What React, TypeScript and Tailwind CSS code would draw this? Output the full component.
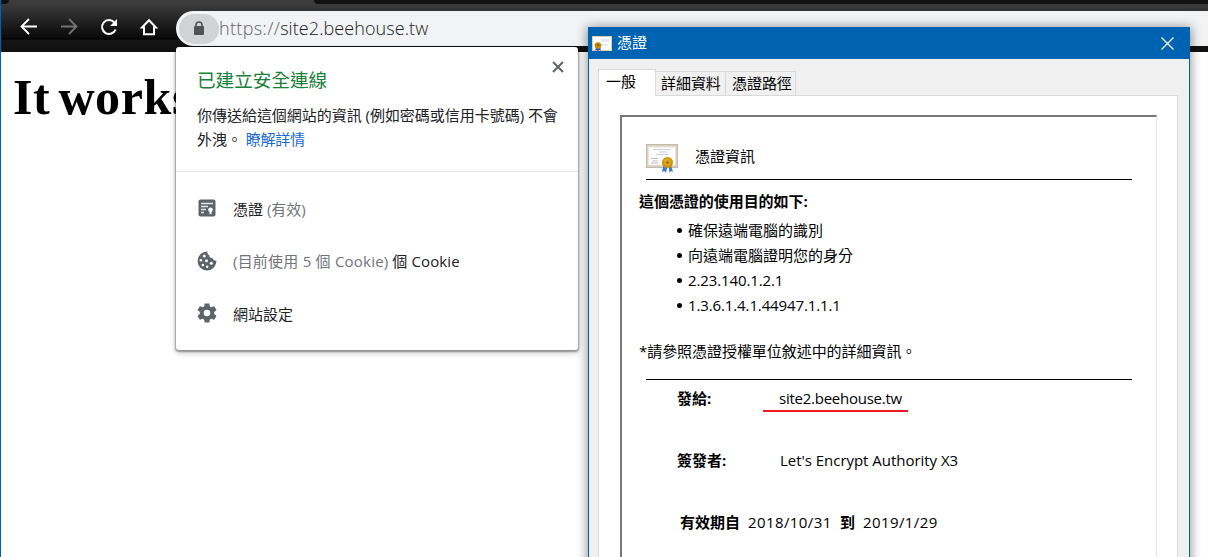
import React from "react";

function BackIcon() {
  return (
    <svg width="20" height="20" viewBox="0 0 20 20" fill="none" stroke="currentColor" strokeWidth="1.800">
      <path d="M18 9.500H3M10 2L2.500 9.500l7.500 7.500" />
    </svg>
  );
}

function ForwardIcon() {
  return (
    <svg width="20" height="20" viewBox="0 0 20 20" fill="none" stroke="currentColor" strokeWidth="1.800">
      <path d="M2 9.500h15M10 2l7.500 7.500-7.500 7.500" />
    </svg>
  );
}

function ReloadIcon() {
  return (
    <svg width="20" height="20" viewBox="0 0 20 20" fill="none">
      <path d="M16.600 12.500A7 7 0 1 1 15.200 5.200" stroke="currentColor" strokeWidth="2" />
      <path d="M18 2v7h-7z" fill="currentColor" />
    </svg>
  );
}

function HomeIcon() {
  return (
    <svg width="20" height="20" viewBox="0 0 20 20" fill="none" stroke="currentColor" strokeWidth="2">
      <path d="M3 10.500L10 3.200l7 7.300h-2v6.700H5v-6.700z" />
    </svg>
  );
}

function LockIcon() {
  return (
    <svg width="12" height="15" viewBox="0 0 12 15">
      <rect x="1" y="5" width="10" height="9" rx="1" fill="#505358" />
      <path d="M3 6V4a3 3 0 0 1 6 0v2" fill="none" stroke="#505358" strokeWidth="1.600" />
    </svg>
  );
}

function CertBadgeIcon() {
  return (
    <svg width="18" height="18" viewBox="0 0 18 18">
      <rect x="0.500" y="0.500" width="17" height="17" rx="2" fill="#5f6368" />
      <path d="M3 4.500h12M3 7.500h7M3 10.500h5M3 13.500h3" stroke="#e4e4e4" strokeWidth="1.300" />
      <circle cx="12.500" cy="10.800" r="2.300" fill="#fff" />
      <path d="M11.500 12h2v3.500l-1-.8-1 .8z" fill="#fff" />
    </svg>
  );
}

function CookieIcon() {
  return (
    <svg width="20" height="20" viewBox="0 0 20 20">
      <path
        d="M10.500 .6A9.400 9.400 0 1 0 19.400 9.500a2.800 2.800 0 0 1-3.600-2.300 2.800 2.800 0 0 1-3.500-3A3 3 0 0 1 10.500.6z"
        fill="#5f6368"
      />
      <g fill="#fff">
        <circle cx="7.300" cy="5" r="1.500" />
        <circle cx="3.900" cy="9.300" r="1.300" />
        <circle cx="9.500" cy="9.800" r="1.500" />
        <circle cx="5.900" cy="14" r="1.300" />
        <circle cx="14.300" cy="12.300" r="1.500" />
        <circle cx="10.200" cy="15.800" r="1.200" />
      </g>
    </svg>
  );
}

function GearIcon() {
  return (
    <svg width="24" height="24" viewBox="0 0 24 24" fill="#5f6368">
      <path d="M19.140 12.940c.04-.3.060-.61.060-.94s-.02-.64-.07-.94l2.030-1.580c.18-.14.230-.41.120-.61l-1.920-3.320c-.12-.22-.37-.29-.59-.22l-2.390.96c-.5-.38-1.030-.7-1.620-.94l-.36-2.540c-.04-.24-.24-.41-.48-.41h-3.840c-.24 0-.43.170-.47.410l-.36 2.540c-.59.240-1.130.570-1.620.940l-2.390-.96c-.22-.08-.47 0-.59.220L2.740 8.870c-.12.210-.08.470.120.610l2.030 1.580c-.05.300-.09.630-.09.940s.02.640.070.940l-2.030 1.580c-.18.140-.23.410-.12.610l1.920 3.320c.12.220.37.290.59.220l2.390-.96c.5.380 1.030.7 1.620.94l.36 2.540c.05.240.24.410.48.410h3.840c.24 0 .44-.17.470-.41l.36-2.540c.59-.24 1.130-.56 1.620-.94l2.390.96c.22.080.47 0 .59-.22l1.920-3.320c.12-.22.070-.47-.12-.61l-2.010-1.580zM12 15.300a3.300 3.300 0 1 1 0-6.600 3.300 3.300 0 0 1 0 6.600z" />
    </svg>
  );
}

function CertificateIcon({ width, height }: { width: number; height: number }) {
  return (
    <svg width={width} height={height} viewBox="0 0 32 29">
      <rect x="0.500" y="0.500" width="31" height="23" fill="#d9d0c2" stroke="#c3bbae" />
      <rect x="2.500" y="3" width="27" height="18" fill="#fff" stroke="#eee5d8" />
      <path d="M7 5.500h18M13 8h8M10 10.500h12" stroke="#c5d1e8" strokeWidth="1" />
      <path d="M5 14.500h7M6 17h6M5 19h7" stroke="#b6bed4" strokeWidth="1" />
      <path d="M17.500 21l-1.500 7 2.500-1 1.500 2 1.500-7zM22.500 21l1 8 1.500-2 2 1-2-7z" fill="#3978e0" />
      <circle cx="21.500" cy="18.500" r="5.500" fill="#cb920c" />
      <circle cx="21.500" cy="18" r="3.500" fill="#dba923" />
      <circle cx="21.500" cy="18.500" r="1.500" fill="#a96f08" />
    </svg>
  );
}

function TitleCertificateIcon() {
  return (
    <svg width="20" height="16" viewBox="0 0 20 16">
      <rect x="0.500" y="0.500" width="19" height="14" fill="#fff" stroke="#e2cda9" />
      <path d="M9 3h8v3H9zM9 8h7v2H9z" fill="#e6e9ee" />
      <path d="M4 11l-1 3.500 2-.5 1 2 1-2 2 .5-1-3.500z" fill="#315ed0" />
      <circle cx="6" cy="9.500" r="3.300" fill="#c58a0b" />
      <circle cx="6" cy="9" r="1.300" fill="#8d6203" />
    </svg>
  );
}

function Toolbar() {
  return (
    <div className="h-[52px] bg-[#101010]">
      <div className="flex h-1 bg-[#3b3b3b]">
        <div className="h-1 w-2 rounded-br-[4px] bg-[#111]" />
        <div className="h-1 w-[305px] bg-[#3b3b3b]" />
        <div className="h-1 flex-1 rounded-bl-[4px] bg-[#111]" />
      </div>
      <div className="flex h-[48px] bg-[linear-gradient(#3b3b3b_0px,#090909_34px,#000_35px,#151515_36px,#101010_48px)]">
        <div className="flex h-[46px] w-[175px] gap-5 pl-[18px] pt-[13px] text-white">
          <BackIcon />
          <span className="text-[#737373]">
            <ForwardIcon />
          </span>
          <ReloadIcon />
          <HomeIcon />
        </div>
        <div className="mt-[7px] flex h-[35px] flex-1 items-center rounded-l-full bg-[#f1f3f4] pl-[3px]">
          <div className="flex h-[30px] w-10 items-center justify-center rounded-full bg-[#d2d3d5]">
            <LockIcon />
          </div>
          <div className="whitespace-pre pb-0.5 text-[18px] font-light leading-[30px] text-[#202124]">
            <span className="tracking-[0.350px] text-[#5f6368]">https://</span>
            <span className="tracking-[0.080px]">site2.beehouse.tw</span>
          </div>
        </div>
      </div>
    </div>
  );
}

function SiteInfoPopup() {
  return (
    <div className="absolute left-44 top-[47px] flex h-[303px] w-[402px] flex-col rounded-[3px] bg-white text-[15px] text-[#202124] shadow-[0_1px_2px_1px_rgba(0,0,0,0.35),0_3px_6px_rgba(0,0,0,0.2)]">
      <div className="flex h-[125px] border-b border-[#e8e8e8] pl-[21px]">
        <div className="w-[355px] shrink-0 pt-[19px]">
          <h2 className="text-[18.600px] leading-7 text-[#188038]">已建立安全連線</h2>
          <p className="mt-[9px] whitespace-pre leading-6">
            <span className="tracking-[-0.030px]">你傳送給這個網站的資訊 (例如密碼或信用卡號碼) 不會</span>
            {"\n"}外洩。<span className="tracking-[-0.200px] text-[#1967d2]"> 瞭解詳情</span>
          </p>
        </div>
        <svg className="mt-[14px] shrink-0" width="12" height="12" viewBox="0 0 12 12">
          <path d="M1 1l10 10M11 1L1 11" stroke="#5f6368" strokeWidth="2" />
        </svg>
      </div>
      <div className="flex flex-col pt-[11px]">
        <div className="flex h-[52px] items-center">
          <span className="-mt-0.5 flex w-[57px] justify-center pl-[5px]"><CertBadgeIcon /></span>
          <span>憑證 <span className="text-[#70757a]">(有效)</span></span>
        </div>
        <div className="flex h-[52px] items-center">
          <span className="flex w-[57px] justify-center pl-[5px]"><CookieIcon /></span>
          <span className="whitespace-pre"><span className="tracking-[0.220px] text-[#70757a]">(目前使用 5 個 Cookie)</span> <span className="tracking-[0.120px]">個 Cookie</span></span>
        </div>
        <div className="flex h-[52px] items-center">
          <span className="flex w-[57px] justify-center pl-[5px]"><GearIcon /></span>
          <span className="pt-0.5">網站設定</span>
        </div>
      </div>
    </div>
  );
}

const purposes = ["確保遠端電腦的識別", "向遠端電腦證明您的身分", "2.23.140.1.2.1", "1.3.6.1.4.1.44947.1.1.1"];

function CertificateDialog() {
  return (
    <div className="absolute left-[588px] top-[27px] flex h-[560px] w-[602px] flex-col border border-[#0063b1] bg-[#f0f0f0] text-[15px] text-black shadow-[0_1px_10px_1px_rgba(0,0,0,0.42)]">
      <div className="flex h-[31px] shrink-0 items-center bg-[#0063b1] pl-[3px] pr-[15px] text-white">
        <TitleCertificateIcon />
        <span className="-mt-0.5 ml-[5px] flex-1">憑證</span>
        <svg width="13" height="13" viewBox="0 0 13 13">
          <path d="M.5.500l12 12M12.500.500l-12 12" stroke="white" strokeWidth="1.200" />
        </svg>
      </div>
      <div className="relative z-10 -mb-px flex h-[37px] shrink-0 items-end pl-[9px]">
        <div className="h-[27px] w-[58px] border border-b-0 border-[#d9d9d9] bg-white pl-[7px] leading-[23px]">一般</div>
        <div className="mb-px h-[24px] w-[70px] border-r border-t border-[#d9d9d9] pl-[5px] leading-[23px] tracking-[-0.050px]">詳細資料</div>
        <div className="mb-px h-[24px] w-[70px] border-r border-t border-[#d9d9d9] pl-[6px] leading-[23px] tracking-[-0.050px]">憑證路徑</div>
      </div>
      <div className="ml-[9px] mr-[11px] flex-1 border border-[#d9d9d9] bg-white pl-[21px] pr-[20px] pt-[19px]">
        <div className="h-full border-l-2 border-r border-t-2 border-l-[#777] border-r-[#e3e3e3] border-t-[#777] pl-[17px]">
          <div className="ml-[7px] mr-6 flex h-[63px] border-b border-black pt-[27px]">
            <CertificateIcon width={32} height={29} />
            <span className="ml-[17px] leading-6">憑證資訊</span>
          </div>
          <div className="mt-[9px] font-bold leading-6 tracking-[-0.050px]">這個憑證的使用目的如下:</div>
          <ul className="mt-[5px] pl-[38px]">
            {purposes.map((purpose, index) => (
              <li key={purpose} className="flex h-[25px] items-center">
                <span className="mr-[6px] size-[5px] rounded-full bg-black" />
                <span className={index > 1 ? "tracking-[-0.120px]" : ""}>{purpose}</span>
              </li>
            ))}
          </ul>
          <div className="mt-[21px] leading-6 tracking-[-0.050px]">*請參照憑證授權單位敘述中的詳細資訊。</div>
          <div className="ml-[7px] mr-6 mt-4 h-px bg-black" />
          <div className="mt-[6px] flex pl-[38px] leading-6">
            <strong className="w-[86px]">發給:</strong>
            <span className="h-[26px] w-[145px] border-b-2 border-[#ed1c24] pl-4 tracking-[-0.250px]">site2.beehouse.tw</span>
          </div>
          <div className="mt-9 flex pl-[38px] leading-6">
            <strong className="w-[103px]">簽發者:</strong>
            <span className="tracking-[-0.030px]">Let&apos;s Encrypt Authority X3</span>
          </div>
          <div className="mt-[38px] flex pl-[41px] leading-6">
            <strong className="w-[68px]">有效期自</strong>
            <span className="w-[92px] tracking-[0.400px]">2018/10/31</span>
            <strong className="w-[23px]">到</strong>
            <span className="tracking-[0.400px]">2019/1/29</span>
          </div>
        </div>
      </div>
    </div>
  );
}

export default function App() {
  return (
    <div className="relative h-[557px] w-[1208px] overflow-hidden border-l border-[#0063b1] bg-white font-['Open_Sans','Noto_Sans_CJK_TC',sans-serif]">
      <Toolbar />
      <h1 className="pl-[12px] pt-[15px] font-['Liberation_Serif',serif] text-[50px] font-bold leading-[60px] tracking-[0.600px] text-black [word-spacing:-5px]">It works!</h1>
      <div className="absolute -left-px top-0">
        <SiteInfoPopup />
        <CertificateDialog />
      </div>
    </div>
  );
}
